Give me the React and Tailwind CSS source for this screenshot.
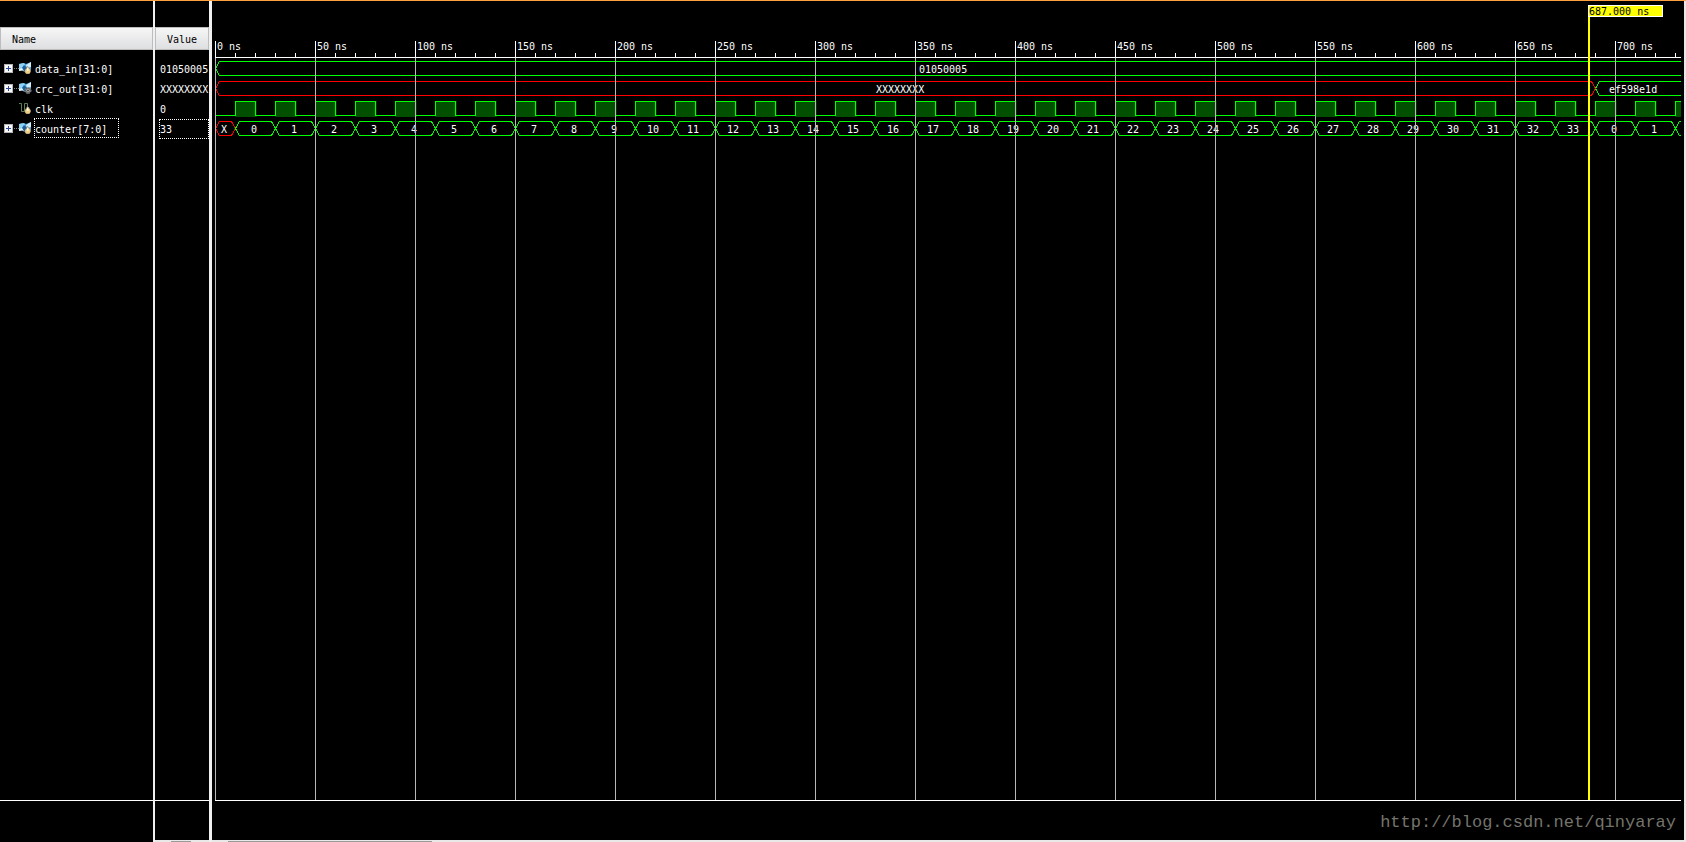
const PX_PER_NS = 2;
const VIEW_END = 733;
const CURSOR_NS = 687;

const GREEN = '#00ff00';
const RED = '#ff0000';

const signals = [
  { name: 'data_in[31:0]', value: '01050005', icon: 'input', bus: true },
  { name: 'crc_out[31:0]', value: 'XXXXXXXX', icon: 'output', bus: true },
  { name: 'clk', value: '0', icon: 'clock', bus: false },
  { name: 'counter[7:0]', value: '33', icon: 'input', bus: true, selected: true },
];

const dataIn = [{ start: 0, end: 760, label: '01050005' }];

const crcOut = [
  { start: 690, end: 760, label: 'ef598e1d' },
  { start: 0, end: 690, label: 'XXXXXXXX', unknown: true },
];

const counter = [
  { start: 0, end: 10, label: 'X', unknown: true },
  ...Array.from({ length: 37 }, (_, i) => ({
    start: 10 + i * 20,
    end: 30 + i * 20,
    label: i < 36 ? String(i % 34) : '',
  })),
];

const clockEdges = Array.from({ length: 37 }, (_, i) => 10 + i * 20);
const minorTicks = Array.from({ length: 74 }, (_, i) => i * 10);
const majorTicks = Array.from({ length: 15 }, (_, i) => i * 50);

const toX = (ns) => ns * PX_PER_NS;

const InputBadge = () => (
  <>
    <path d="M8.5 4L10.5 6L12 9L10.5 12H7L5.5 9.5L7 6Z" fill="#8f8468" />
    <circle cx="8.8" cy="9" r="2.6" fill="#f2cf82" />
    <path d="M8 5.5H9.5V9H8Z" fill="#fffdf0" />
  </>
);

const SignalIcon = ({ type }) => {
  if (type === 'clock') {
    return (
      <svg width="13" height="13" viewBox="0 0 13 13" aria-hidden="true">
        <path d="M0 1.5H2.5V9.5H5.5V1.5H8.5V5" fill="none" stroke="#5c7d58" />
        <InputBadge />
      </svg>
    );
  }
  return (
    <svg width="13" height="13" viewBox="0 0 13 13" aria-hidden="true">
      <path d="M0 2L5 1L7 2L12 0V8L8 10H5L4 8L0 9Z" fill="#4aa3d8" />
      <path d="M0 2L5 1L6 3L3 6L0 7Z" fill="#8fd3f4" />
      <path d="M7 3L12 0V5L8 6Z" fill="#cfeefc" />
      <path d="M5 3L8 6L7 10H5L3 6Z" fill="#1d5f9c" />
      <path d="M0 7L3 6L5 9L3 8.5L0 9Z" fill="#e4f4fb" />
      {type === 'input' ? (
        <InputBadge />
      ) : (
        <>
          <circle cx="9" cy="8.5" r="3" fill="#4c4c4c" stroke="#9a9a9a" strokeDasharray="1.5 1" />
          <circle cx="9" cy="8.5" r="1.5" fill="none" stroke="#b4b4b4" />
        </>
      )}
    </svg>
  );
};

const ExpandButton = ({ name }) => (
  <button
    type="button"
    aria-label={`Expand ${name}`}
    className="flex h-[9px] w-[9px] shrink-0 items-center justify-center bg-[#f4f4f4]"
  >
    <svg width="9" height="9" viewBox="0 0 9 9" shapeRendering="crispEdges">
      <rect x="0" y="0" width="9" height="9" fill="#b4b4b4" />
      <rect x="1" y="1" width="7" height="7" fill="#f8f8f8" />
      <rect x="2" y="4" width="5" height="1" fill="#2c4a9c" />
      <rect x="4" y="2" width="1" height="5" fill="#2c4a9c" />
    </svg>
  </button>
);

const ColumnHeader = ({ children, className }) => (
  <div
    className={`mt-[26px] h-[23px] border border-[#bdbdbd] bg-linear-to-b from-[#f6f6f6] to-[#dedfe1] text-black leading-[23px] ${className}`}
  >
    {children}
  </div>
);

const NamePanel = () => (
  <div className="flex w-[153px] shrink-0 flex-col">
    <ColumnHeader className="pl-[11px]">Name</ColumnHeader>
    <ul className="flex-1 border-b border-white pt-2">
      {signals.map((signal) => (
        <li key={signal.name} className="flex h-5 items-center pl-1">
          {signal.bus ? (
            <>
              <ExpandButton name={signal.name} />
              <span className="ml-px w-[5px] border-t border-dotted border-[#808080]" />
            </>
          ) : (
            <span className="w-[15px]" />
          )}
          <SignalIcon type={signal.icon} />
          <span
            className={`ml-0.5 h-5 border border-dotted pt-px leading-[19px] ${
              signal.selected ? 'w-[85px] border-white' : 'border-transparent'
            }`}
          >
            {signal.name}
          </span>
        </li>
      ))}
    </ul>
    <div className="h-[41px]" />
  </div>
);

const ValuePanel = () => (
  <div className="flex w-[54px] shrink-0 flex-col">
    <ColumnHeader className="pl-[11px]">Value</ColumnHeader>
    <ul className="flex-1 border-b border-white pt-[9px] pl-1">
      {signals.map((signal) => (
        <li
          key={signal.name}
          className={`h-5 border border-dotted leading-5 ${
            signal.selected ? 'border-white' : 'border-transparent'
          }`}
        >
          {signal.value}
        </li>
      ))}
    </ul>
    <div className="h-[39px]" />
    <div className="flex h-0.5 items-end bg-[#e8e8e8] pl-4">
      <span className="h-px w-5 bg-[#9a9a9a]" />
    </div>
  </div>
);

const Bus = ({ y, segments }) => (
  <g>
    {segments.map(({ start, end, label, unknown }) => {
      const x1 = toX(start);
      const x2 = toX(end);
      const mid = (x1 + toX(Math.min(end, VIEW_END))) / 2;
      return (
        <g key={start}>
          <path
            d={`M${x1} 7L${x1 + 4} 0H${x2 - 4}L${x2} 7L${x2 - 4} 14H${x1 + 4}Z`}
            transform={`translate(0.5 ${y + 0.5})`}
            fill="none"
            stroke={unknown ? RED : GREEN}
          />
          <text x={Math.floor(mid - label.length * 3.5 - 0.5)} y={y + 12} fill="#ffffff">
            {label}
          </text>
        </g>
      );
    })}
  </g>
);

const Clock = ({ y }) => (
  <g>
    {clockEdges.map((ns) => (
      <g key={ns}>
        <rect x={toX(ns)} y={y} width="22" height="16" fill="#003000" />
        <rect x={toX(ns) + 1} y={y} width="20" height="16" fill="#005000" />
      </g>
    ))}
    <path
      d={`M0 ${y + 14}${clockEdges
        .map((ns) => `H${toX(ns)}V${y}H${toX(ns) + 20}V${y + 14}`)
        .join('')}`}
      transform="translate(0.5 0.5)"
      fill="none"
      stroke={GREEN}
    />
  </g>
);

const Waveform = () => (
  <svg className="min-h-0 w-full flex-1 border-b border-white text-[10px]">
    {/* Time ruler */}
    <rect x="0" y="56" width="100%" height="1" fill="#ffffff" />
    {minorTicks.map((ns) => (
      <rect key={ns} x={toX(ns)} y="52" width="1" height="5" fill="#ffffff" />
    ))}
    {majorTicks.map((ns) => (
      <g key={ns} fill="#ffffff">
        <rect x={toX(ns)} y="40" width="1" height="17" />
        <text x={toX(ns) + 2} y="49">{`${ns} ns`}</text>
      </g>
    ))}

    {/* Signals */}
    <g shapeRendering="crispEdges">
      <Bus y={60} segments={dataIn} />
      <Bus y={80} segments={crcOut} />
      <Clock y={100} />
      <Bus y={120} segments={counter} />
    </g>

    {/* Grid */}
    {majorTicks.map((ns) => (
      <rect key={ns} x={toX(ns)} y="57" width="1" height="100%" fill="#b8b8b8" />
    ))}

    {/* Cursor */}
    <rect x={toX(CURSOR_NS) - 1} y="16" width="2" height="100%" fill="#ffff00" />
    <rect x={toX(CURSOR_NS) - 1} y="4" width="75" height="12" fill="#ffffff" />
    <rect x={toX(CURSOR_NS)} y="5" width="73" height="10" fill="#ffff00" />
    <text x={toX(CURSOR_NS)} y="14" fill="#000000">
      {`${CURSOR_NS.toFixed(3)} ns`}
    </text>
  </svg>
);

const App = () => (
  <div className="flex h-screen overflow-hidden border-t border-[#ffa040] bg-black font-['DejaVu_Sans_Mono',monospace] text-[10px] whitespace-pre text-white">
    <NamePanel />
    <div className="w-0.5 shrink-0 bg-[#f0f0f0]" />
    <ValuePanel />
    <div className="w-[3px] shrink-0 bg-[#f0f0f0]" />
    <div className="flex min-w-0 flex-1 flex-col">
      <div className="flex min-h-0 flex-1 flex-col px-[3px]">
        <Waveform />
      </div>
      <footer className="flex h-[39px] items-center justify-end pt-1 pr-2">
        <a
          href="http://blog.csdn.net/qinyaray"
          className="font-['Liberation_Mono',monospace] text-[17px] text-[#74746c]"
        >
          http://blog.csdn.net/qinyaray
        </a>
      </footer>
      <div className="flex h-0.5 items-end bg-[#e8e8e8] pl-4">
        <span className="h-px w-[204px] bg-[#9a9a9a]" />
      </div>
    </div>
    <div className="w-0.5 shrink-0 bg-[#e8e8e8]" />
  </div>
);

export default App;
